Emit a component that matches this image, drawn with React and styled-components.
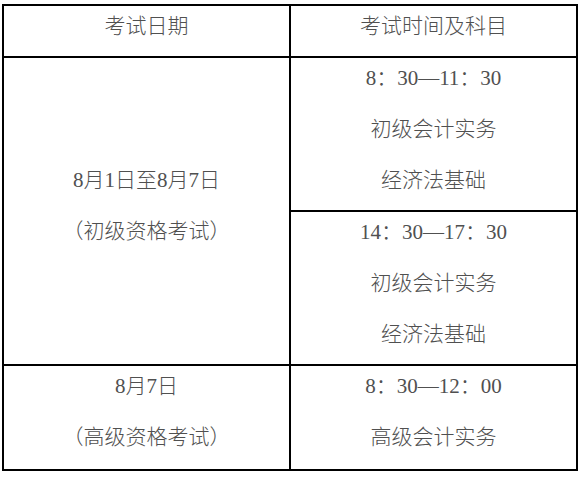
import styled, { createGlobalStyle } from 'styled-components';

const GlobalStyle = createGlobalStyle`
  html, body {
    margin: 0;
    padding: 0;
    background: #fff;
  }
`;

const Schedule = styled.div`
  display: grid;
  grid-template-columns: 285px 285px;
  grid-template-rows: 50px 152px 152px 103px;
  gap: 2px;
  padding: 2px;
  margin: 4px 0 0 2px;
  width: max-content;
  background: #000;
  font-family: "Liberation Serif", "Noto Sans CJK SC", serif;
  font-size: 21px;
  font-weight: 300;
  color: #505050;
`;

const Cell = styled.div`
  background: #fff;
  display: flex;
  flex-direction: column;
  align-items: center;
  justify-content: ${(p) => (p.$middle ? 'center' : 'flex-start')};
  gap: 11px;
  padding-bottom: ${(p) => (p.$middle ? '11px' : '0')};
  grid-row: ${(p) => p.$rows || 'auto'};
`;

const Line = styled.div`
  line-height: 40px;
  height: 40px;
  white-space: nowrap;
`;

// digits stay in the serif face, the light weight is only for the CJK text
const Num = styled.span`
  font-family: "Liberation Serif", serif;
  font-weight: 400;
`;

const sessions = [
  { from: ['8', '30'], to: ['11', '30'], subjects: ['初级会计实务', '经济法基础'] },
  { from: ['14', '30'], to: ['17', '30'], subjects: ['初级会计实务', '经济法基础'] },
];

function TimeRange({ from, to }) {
  return (
    <Line>
      <Num>{from[0]}</Num>：<Num>{from[1]}—{to[0]}</Num>：<Num>{to[1]}</Num>
    </Line>
  );
}

export default function App() {
  return (
    <>
      <GlobalStyle />
      <Schedule>
        <Cell>
          <Line>考试日期</Line>
        </Cell>
        <Cell>
          <Line>考试时间及科目</Line>
        </Cell>

        <Cell $middle $rows="span 2">
          <Line>
            <Num>8</Num>月<Num>1</Num>日至<Num>8</Num>月<Num>7</Num>日
          </Line>
          <Line>（初级资格考试）</Line>
        </Cell>
        {sessions.map((s) => (
          <Cell key={s.from.join()}>
            <TimeRange from={s.from} to={s.to} />
            {s.subjects.map((sub) => (
              <Line key={sub}>{sub}</Line>
            ))}
          </Cell>
        ))}

        <Cell>
          <Line>
            <Num>8</Num>月<Num>7</Num>日
          </Line>
          <Line>（高级资格考试）</Line>
        </Cell>
        <Cell>
          <TimeRange from={['8', '30']} to={['12', '00']} />
          <Line>高级会计实务</Line>
        </Cell>
      </Schedule>
    </>
  );
}
